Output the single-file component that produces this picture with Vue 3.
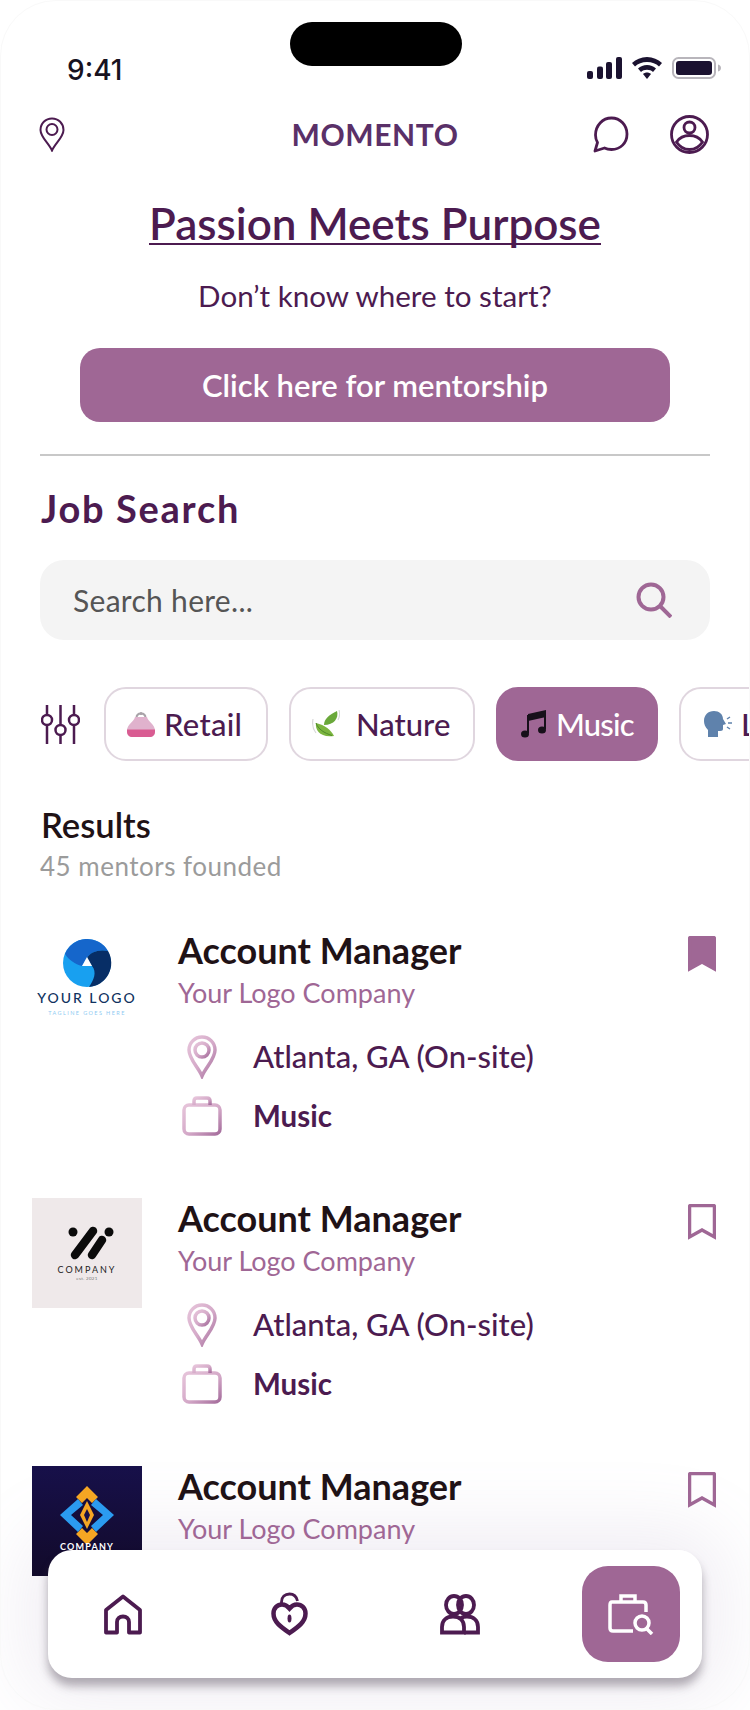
<template>
  <div class="phone">
    <svg class="defs" width="0" height="0">
      <defs>
        <linearGradient id="soft" x1="0" y1="0" x2="1" y2="1">
          <stop offset="0" stop-color="#e6c4da" />
          <stop offset="0.55" stop-color="#d4a9c8" />
          <stop offset="1" stop-color="#a56d9c" />
        </linearGradient>
      </defs>
    </svg>

    <div class="frame-line"></div>
    <div class="island"></div>

    <div class="status">
      <span class="time">9:41</span>
      <div class="status-icons">
        <svg width="35" height="22" viewBox="0 0 35 22" fill="#1b1230">
          <rect x="0" y="14" width="6" height="8" rx="2" />
          <rect x="10" y="9.500" width="6" height="12.500" rx="2" />
          <rect x="19" y="5" width="6" height="17" rx="2" />
          <rect x="29" y="0" width="6" height="22" rx="2" />
        </svg>
        <svg width="30" height="22" viewBox="0 0 30 22" fill="#1b1230">
          <path d="M15 0C9 0 4 2.400 0 6L3 9.500C6 6.500 10 5 15 5C20 5 24 6.500 27 9.500L30 6C26 2.400 21 0 15 0Z" />
          <path d="M15 8C11.500 8 8.500 9.300 6 11.500L9 15C10.500 13.500 12.500 12.800 15 12.800C17.500 12.800 19.500 13.500 21 15L24 11.500C21.500 9.300 18.500 8 15 8Z" />
          <path d="M15 15.500C13.500 15.500 12.200 16 11 17L15 22L19 17C17.800 16 16.500 15.500 15 15.500Z" />
        </svg>
        <svg width="49" height="22" viewBox="0 0 49 22">
          <rect x="1" y="1" width="42" height="20" rx="5.500" fill="none" stroke="#b8b5bb" stroke-width="2" />
          <rect x="4" y="4" width="36" height="14" rx="3" fill="#1b1230" />
          <path d="M46 7.500C47.800 8 49 9.300 49 11C49 12.700 47.800 14 46 14.500Z" fill="#b8b5bb" />
        </svg>
      </div>
    </div>

    <header class="topbar">
      <svg class="pin" width="26" height="35" viewBox="0 0 26 35" fill="none" stroke="#4c1b50" stroke-width="2">
        <path d="M13 1.500C6.500 1.500 1.500 6.500 1.500 13C1.500 20 9.500 26 13 33.500C16.500 26 24.500 20 24.500 13C24.500 6.500 19.500 1.500 13 1.500Z" />
        <circle cx="13" cy="12.500" r="5.500" />
      </svg>
      <span class="brand">MOMENTO</span>
      <div class="top-actions">
        <svg width="36" height="37" viewBox="0 0 36 37" fill="none" stroke="#4c1b50" stroke-width="2.800" stroke-linejoin="round">
          <path d="M2 35L4.500 26.500C3 24 2.500 21.500 2.500 19C2.500 9.500 9.500 2 18.500 2C27.500 2 34 9.500 34 18C34 27 27.500 33.500 18.500 33.500C15.500 33.500 13.500 33 11.500 32Z" />
        </svg>
        <svg width="39" height="39" viewBox="0 0 39 39" fill="none" stroke="#4c1b50" stroke-width="2.800">
          <circle cx="19.500" cy="19.500" r="18" />
          <circle cx="19.500" cy="12.500" r="5.500" />
          <path d="M6.500 27C10 22 14 20.500 19.500 20.500C25 20.500 29 22 32.500 27C29 32.500 25 34.500 19.500 34.500C14 34.500 10 32.500 6.500 27Z" />
        </svg>
      </div>
    </header>

    <section class="hero">
      <h1>Passion Meets Purpose</h1>
      <p>Don’t know where to start?</p>
      <button class="mentor-btn">Click here for mentorship</button>
    </section>

    <div class="divider"></div>

    <h2 class="search-title">Job Search</h2>

    <div class="search-box">
      <span>Search here...</span>
      <svg width="36" height="36" viewBox="0 0 36 36" fill="none" stroke="#9f6795" stroke-width="4">
        <circle cx="15" cy="15" r="12.500" />
        <path d="M24 24L35 35" />
      </svg>
    </div>

    <div class="chips">
      <svg class="filter" width="39" height="40" viewBox="0 0 39 40" fill="none" stroke="#4c1b50" stroke-width="2.500">
        <path d="M6 1V11M6 21V40M19.500 1V21M19.500 31V40M33 1V11M33 21V40" />
        <circle cx="6" cy="16" r="5" />
        <circle cx="19.500" cy="26" r="5" />
        <circle cx="33" cy="16" r="5" />
      </svg>

      <div class="chip chip-retail">
        <svg width="28" height="25" viewBox="0 0 28 25">
          <path d="M9.500 6C9.500 3 11.500 1.500 14 1.500C16.500 1.500 18.500 3 18.500 6" fill="none" stroke="#a8a3a8" stroke-width="2" />
          <circle cx="14" cy="1.500" r="1.500" fill="#a8a3a8" />
          <path d="M8 5H20C21 10 28 12 28 19C28 23 26 25 22 25H6C2 25 0 23 0 19C0 12 7 10 8 5Z" fill="#e0b2cd" />
          <path d="M0 17.500H28V19.500C28 23 26 25 22 25H6C2 25 0 23 0 19.500Z" fill="#d95c92" />
        </svg>
        <span>Retail</span>
      </div>

      <div class="chip chip-nature">
        <svg width="28" height="28" viewBox="0 0 28 28">
          <path d="M12 15C12 9 17 5 25 1C27 8 22 15 12 15Z" fill="#6aa83a" />
          <path d="M4 13C3 20 8 28 22 26C19 20 13 15 4 13Z" fill="#7cb53f" />
          <path d="M4 13C6 19 12 23 20 25.500" fill="none" stroke="#4d8a28" stroke-width="1" />
          <path d="M1 9C0 14 1 19 4 23M27 0C28 3 28 6 26 10" fill="none" stroke="#d8d8d8" stroke-width="1.200" />
        </svg>
        <span>Nature</span>
      </div>

      <div class="chip chip-music active">
        <svg width="26" height="28" viewBox="0 0 26 28">
          <path d="M7 4L25 0V7L7 11Z" fill="#17101a" />
          <path d="M7 5V23M24 1V19" stroke="#17101a" stroke-width="2" fill="none" />
          <ellipse cx="4" cy="24" rx="4" ry="3.500" fill="#17101a" />
          <ellipse cx="21" cy="20" rx="4" ry="3.500" fill="#17101a" />
        </svg>
        <span>Music</span>
      </div>

      <div class="chip chip-lang">
        <svg width="28" height="26" viewBox="0 0 28 26">
          <path d="M10 0C15 0 19 3 19 8L22 13L19 14V18C19 20 17 20 14 20V26H4V19C1 16 0 13 0 10C0 4 4 0 10 0Z" fill="#5f82ac" />
          <path d="M23 8L26 6M24 12H28M23 16L26 18" stroke="#5f82ac" stroke-width="1.500" fill="none" />
        </svg>
        <span>L</span>
      </div>
    </div>

    <h3 class="results-title">Results</h3>
    <p class="results-count">45 mentors founded</p>

    <div class="nav-glow"></div>

    <div class="jobs">
      <article v-for="job in jobs" :key="job.id" class="job">
        <div class="logo" :class="'logo-' + job.logo">
          <svg v-if="job.logo === 'blue'" width="110" height="110" viewBox="0 0 110 110">
            <circle cx="55" cy="33" r="24" fill="#18a0f0" />
            <path d="M33 24A24 24 0 0 1 76 21C67 19 58 22 55 28L50 36C43 34 37 30 33 24Z" fill="#1566cb" />
            <path d="M76 21A24 24 0 0 1 57 57C62 50 65 42 60 36L55 28C58 22 67 19 76 21Z" fill="#072e66" />
            <path d="M55 27L60 36H50Z" fill="#fff" />
            <text x="55" y="73" class="logo-name">YOUR LOGO</text>
            <text x="55" y="85" class="logo-tag">TAGLINE GOES HERE</text>
          </svg>
          <svg v-else-if="job.logo === 'mono'" width="110" height="110" viewBox="0 0 110 110">
            <circle cx="41" cy="34" r="4.500" fill="#0b0b0b" />
            <circle cx="77" cy="34" r="4.500" fill="#0b0b0b" />
            <path d="M61 33L43 57" stroke="#0b0b0b" stroke-width="8.500" stroke-linecap="round" />
            <path d="M70 42L60 57" stroke="#0b0b0b" stroke-width="8.500" stroke-linecap="round" />
            <text x="55" y="75" class="mono-name">COMPANY</text>
            <text x="55" y="82" class="mono-tag">est. 2021</text>
          </svg>
          <svg v-else width="110" height="110" viewBox="0 0 110 110">
            <path d="M55 20L66 31L60 37L55 32L50 37L44 31Z" fill="#f5a623" />
            <path d="M55 79L66 68L60 62L55 67L50 62L44 68Z" fill="#f5a623" />
            <path d="M46 33L28 49L46 66L51 60L39 49L51 39Z" fill="#2b9bf0" />
            <path d="M64 33L82 49L64 66L59 60L71 49L59 39Z" fill="#2b9bf0" />
            <path d="M55 35L62 49L55 63L48 49Z" fill="#f5a623" />
            <path d="M55 43L58 49L55 56L52 49Z" fill="#17104a" />
            <text x="55" y="84" class="dark-name">COMPANY</text>
          </svg>
        </div>

        <div class="job-body">
          <h4>Account Manager</h4>
          <p class="company">Your Logo Company</p>
          <div class="meta">
            <span class="meta-icon">
              <svg width="30" height="44" viewBox="0 0 30 44" fill="none" stroke="url(#soft)" stroke-width="3.500">
                <path d="M15 2C7.500 2 2 8 2 15C2 24 11 32 15 41C19 32 28 24 28 15C28 8 22.500 2 15 2Z" />
                <circle cx="15" cy="15" r="7" />
              </svg>
            </span>
            <span class="meta-loc">Atlanta, GA (On-site)</span>
          </div>
          <div class="meta meta-second">
            <span class="meta-icon">
              <svg width="40" height="40" viewBox="0 0 40 40" fill="none" stroke="url(#soft)" stroke-width="3.500">
                <rect x="2" y="9" width="36" height="29" rx="5" />
                <path d="M12 9V5C12 3 13 2 15 2H25C27 2 28 3 28 5V9" />
              </svg>
            </span>
            <span class="meta-cat">Music</span>
          </div>
        </div>

        <svg class="bookmark" width="28" height="36" viewBox="0 0 28 36" :fill="job.saved ? '#9f6795' : 'none'" stroke="#9f6795" stroke-width="3.500">
          <path d="M1.500 3C1.500 2 2 1.500 3 1.500H25C26 1.500 26.500 2 26.500 3V33L14 26L1.500 33Z" />
        </svg>
      </article>
    </div>

    <nav class="nav">
      <div class="nav-item">
        <svg width="38" height="41" viewBox="0 0 38 41" fill="none" stroke="#4c1b50" stroke-width="3.800" stroke-linejoin="round">
          <path d="M19 2.500L36 16V38.500H25V28C25 24.500 22.500 22.500 19 22.500C15.500 22.500 13 24.500 13 28V38.500H2V16Z" />
        </svg>
      </div>
      <div class="nav-item nav-heart">
        <svg width="37" height="44" viewBox="0 0 37 44" fill="none" stroke="#4c1b50" stroke-width="4.500">
          <path d="M18.500 41C10 35 2.500 30 2.500 21.500C2.500 16 6.500 12.500 11 12.500C14 12.500 16.500 14 18.500 16.500C20.500 14 23 12.500 26 12.500C30.500 12.500 34.500 16 34.500 21.500C34.500 30 27 35 18.500 41Z" />
          <path d="M10.500 13V10C10.500 5 14 2 18.500 2C22.500 2 25.500 4.500 26.500 9" stroke-width="2.800" />
          <ellipse cx="18.500" cy="26.500" rx="2" ry="4" fill="#4c1b50" stroke="none" />
        </svg>
      </div>
      <div class="nav-item nav-people">
        <svg width="40" height="41" viewBox="0 0 40 41" fill="none" stroke="#4c1b50" stroke-width="3.800">
          <ellipse cx="14" cy="11" rx="8" ry="9" />
          <ellipse cx="26" cy="11" rx="8" ry="9" />
          <path d="M2 38.500V33C2 26 7 22.500 13 22.500C19 22.500 24 26 24 33V38.500Z" />
          <path d="M21 24C23 22.800 25 22.500 27 22.500C33 22.500 38 26 38 33V38.500H24" />
        </svg>
      </div>
      <div class="nav-item nav-active">
        <svg width="46" height="42" viewBox="0 0 46 42" fill="none" stroke="#fff" stroke-width="3.500">
          <path d="M38 19V12C38 10 37 9 35 9H4C3 9 2 10 2 12V35C2 37 3 38 5 38H25" />
          <path d="M13 9V3H27V9" />
          <circle cx="34" cy="30" r="7" />
          <path d="M39 36L44 41" />
        </svg>
      </div>
    </nav>
  </div>
</template>

<script setup>
const jobs = [
  { id: 1, logo: 'blue', saved: true },
  { id: 2, logo: 'mono', saved: false },
  { id: 3, logo: 'dark', saved: false }
];
</script>

<style>
html, body {
  margin: 0;
  background: #fff;
}
</style>

<style scoped>
.phone {
  position: relative;
  width: 750px;
  height: 1710px;
  box-sizing: border-box;
  overflow: hidden;
  background: #fff;
  font-family: "Lato", "Noto Sans", sans-serif;
  color: #4c1b50;
}

.defs {
  position: absolute;
}

.frame-line {
  position: absolute;
  inset: 0;
  z-index: 3;
  border: 1px solid #f9f9f9;
  border-radius: 56px;
  pointer-events: none;
}

.island {
  position: absolute;
  top: 22px;
  left: 290px;
  width: 172px;
  height: 44px;
  border-radius: 22px;
  background: #000;
}

.status {
  display: flex;
  justify-content: space-between;
  align-items: flex-start;
  height: 100px;
  padding: 57px 29px 0 67px;
  box-sizing: border-box;
}

.time {
  font-family: "Inter", sans-serif;
  font-size: 28px;
  line-height: 27px;
  font-weight: 500;
  color: #17121f;
}

.status-icons {
  display: flex;
  gap: 10px;
}

.topbar {
  position: relative;
  display: flex;
  justify-content: space-between;
  align-items: center;
  height: 60px;
  margin-top: 4px;
  padding: 0 41px 0 39px;
}

.brand {
  position: absolute;
  left: 0;
  right: 0;
  text-align: center;
  font-size: 30px;
  font-weight: 700;
  letter-spacing: 0.600px;
  color: #5a3068;
}

.top-actions {
  display: flex;
  align-items: center;
  gap: 41px;
}

.hero {
  text-align: center;
  margin-top: 39px;
}

.hero h1 {
  display: inline-block;
  margin: 0;
  font-size: 44px;
  line-height: 40px;
  font-weight: 600;
  border-bottom: 2px solid #4c1b50;
  color: #4c1b50;
  vertical-align: top;
}

.hero p {
  margin: 34px 0 0;
  font-size: 29.600px;
  line-height: 34px;
  font-weight: 400;
}

.mentor-btn {
  display: block;
  width: 590px;
  height: 74px;
  margin: 35px auto 0;
  border: none;
  border-radius: 20px;
  background: #9f6795;
  color: #fff;
  font-family: inherit;
  font-size: 31px;
  font-weight: 600;
}

.divider {
  height: 2px;
  margin: 32px 40px 0;
  background: #c8c8c8;
}

.search-title {
  margin: 30px 0 0 41px;
  font-size: 38px;
  line-height: 44px;
  font-weight: 700;
  letter-spacing: 1.700px;
}

.search-box {
  display: flex;
  justify-content: space-between;
  align-items: center;
  height: 80px;
  margin: 30px 40px 0;
  padding: 0 38px 0 33px;
  border-radius: 24px;
  background: #f4f4f4;
  color: #555;
  font-size: 30px;
  letter-spacing: 0.300px;
}

.chips {
  display: flex;
  align-items: center;
  height: 74px;
  margin-top: 47px;
  padding-left: 41px;
}

.filter {
  flex: none;
  margin-right: 24px;
}

.chip {
  flex: none;
  display: flex;
  align-items: center;
  height: 74px;
  box-sizing: border-box;
  margin-right: 21px;
  border: 2px solid #e0d6df;
  border-radius: 22px;
  font-size: 31px;
  font-weight: 500;
}

.chip-retail {
  width: 164px;
  padding-left: 21px;
  gap: 9px;
  letter-spacing: 0.300px;
}

.chip-nature {
  width: 186px;
  padding-left: 21px;
  gap: 16px;
}

.chip-music {
  width: 162px;
  padding-left: 23px;
  gap: 9px;
  letter-spacing: -0.800px;
}

.chip-lang {
  width: 180px;
  padding-left: 23px;
  gap: 9px;
}

.active {
  border-color: #9f6795;
  background: #9f6795;
  color: #fff;
}

.results-title {
  margin: 44px 0 0 41px;
  font-size: 34.600px;
  line-height: 40px;
  font-weight: 600;
  color: #1f1216;
}

.results-count {
  margin: 6px 0 0 40px;
  font-size: 26px;
  line-height: 30px;
  letter-spacing: 0.500px;
  color: #9b9b9b;
}

.jobs {
  position: relative;
  z-index: 1;
  margin-top: 49px;
}

.job {
  display: flex;
  align-items: flex-start;
  height: 268px;
  padding-left: 32px;
}

.logo {
  flex: none;
  width: 110px;
  height: 110px;
}

.logo-mono {
  background: #efe9ea;
}

.logo-dark {
  background: linear-gradient(#17104a, #120a2a);
}

.logo-name {
  font-size: 14px;
  letter-spacing: 2px;
  font-weight: 500;
  text-anchor: middle;
  fill: #103260;
}

.logo-tag {
  font-size: 5.500px;
  letter-spacing: 1.400px;
  text-anchor: middle;
  fill: #8fcbf2;
}

.mono-name {
  font-size: 9px;
  letter-spacing: 2px;
  text-anchor: middle;
  fill: #222;
}

.mono-tag {
  font-size: 4.500px;
  letter-spacing: 0.300px;
  text-anchor: middle;
  fill: #777;
}

.dark-name {
  font-size: 9px;
  font-weight: 700;
  letter-spacing: 1.200px;
  text-anchor: middle;
  fill: #fff;
}

.job-body {
  flex: 1;
  margin-left: 36px;
}

.job h4 {
  margin: 0;
  font-size: 36px;
  line-height: 40px;
  font-weight: 700;
  color: #1f1216;
}

.company {
  margin: 7px 0 0;
  font-size: 27px;
  line-height: 32px;
  color: #9f6795;
}

.meta {
  display: flex;
  align-items: center;
  height: 44px;
  margin-top: 26px;
}

.meta-second {
  margin-top: 15px;
}

.meta-icon {
  display: flex;
  justify-content: center;
  width: 44px;
  margin: 0 29px 0 2px;
}

.meta-loc {
  margin-bottom: 3px;
  font-size: 31px;
  font-weight: 500;
}

.meta-cat {
  margin-bottom: 2px;
  font-size: 29.500px;
  font-weight: 700;
}

.bookmark {
  flex: none;
  margin: 6px 34px 0 0;
}

.nav-glow {
  position: absolute;
  left: 48px;
  top: 1550px;
  width: 654px;
  height: 128px;
  border-radius: 24px;
  box-shadow: 0 0 70px 24px rgba(150, 120, 170, 0.13);
}

.nav {
  position: absolute;
  z-index: 2;
  left: 48px;
  top: 1550px;
  width: 654px;
  height: 128px;
  box-sizing: border-box;
  display: flex;
  align-items: center;
  gap: 71.500px;
  padding: 0 22px 0 25.500px;
  border-radius: 24px;
  background: #fff;
  box-shadow: 0 8px 10px rgba(70, 60, 75, 0.4);
}

.nav-item {
  flex: none;
  display: flex;
  align-items: center;
  justify-content: center;
  width: 98px;
  height: 96px;
}

.nav-heart svg {
  margin-right: 6px;
}

.nav-people svg {
  margin-right: 3px;
}

.nav-active {
  border-radius: 26px;
  background: #9f6795;
}
</style>
